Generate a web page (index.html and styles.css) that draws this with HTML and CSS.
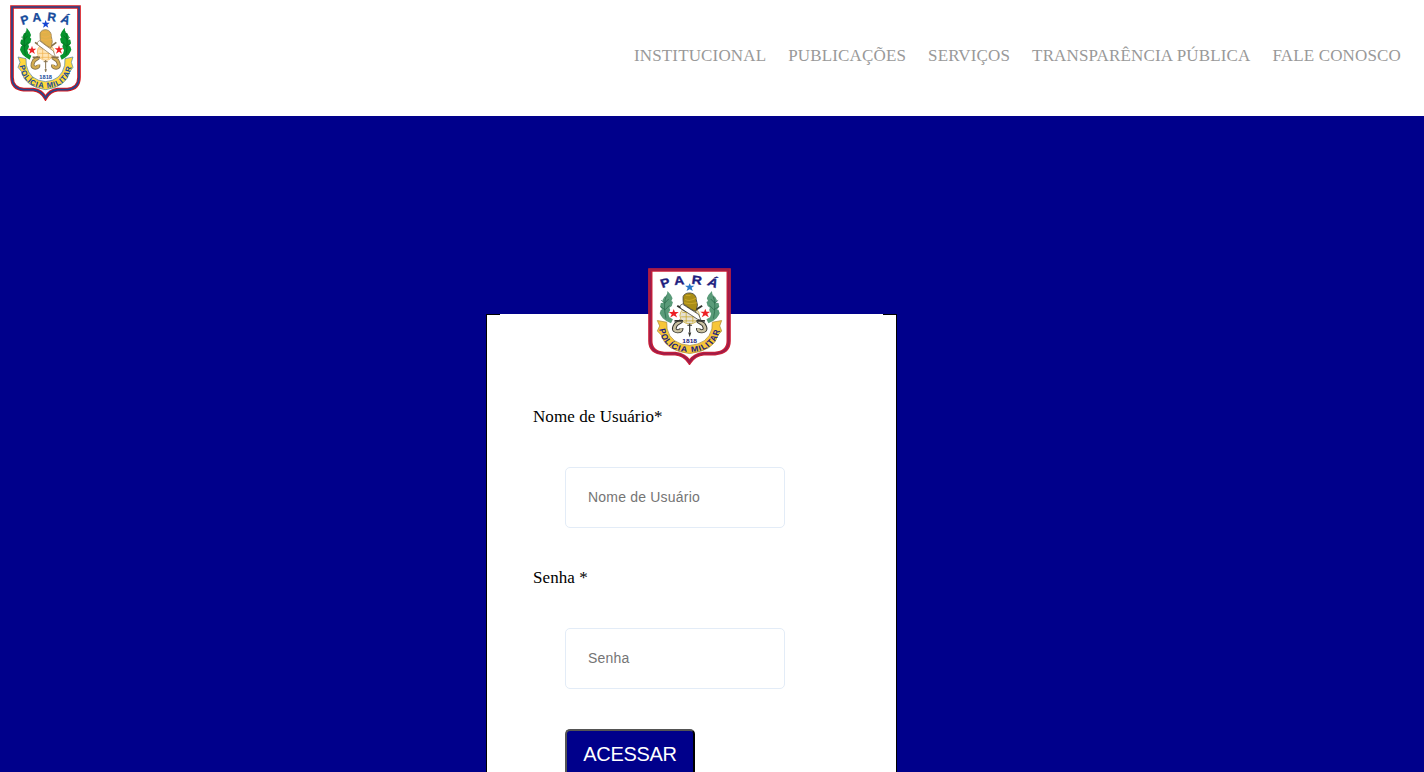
FILE: index.html
```html
<!DOCTYPE html>
<html lang="pt-BR">
<head>
<meta charset="utf-8">
<title>Polícia Militar do Pará</title>
<link rel="stylesheet" href="styles.css">
</head>
<body>
<header class="topbar">
  <svg class="crest crest-small" viewBox="30 15 213 288" preserveAspectRatio="none" role="img" aria-label="Pará Polícia Militar">
    <defs>
      <symbol id="crest" viewBox="30 15 213 288" preserveAspectRatio="none">
        <path d="M36 21H237V232Q237 266 202 269H173Q149 272 136.500 294Q124 272 100 269H71Q36 266 36 232Z" fill="#fff" stroke="var(--edge)" stroke-width="11"/>
        <path d="M36 21H237V232Q237 266 202 269H173Q149 272 136.500 294Q124 272 100 269H71Q36 266 36 232Z" fill="none" stroke="var(--rim)" stroke-width="5"/>
        <g class="crest-name">
          <text transform="translate(78 71) rotate(-18)">P</text>
          <text transform="translate(111 64) rotate(-5)">A</text>
          <text transform="translate(154 63) rotate(7)">R</text>
          <text transform="translate(192 70) rotate(23)">Á</text>
        </g>
        <path d="M137 60l3 8h9l-7 6 3 9-8-5-8 5 3-9-7-6h9z" fill="var(--star)"/>
        <path d="M96 137l3 9h10l-8 6 4 10-9-6-9 6 4-10-8-6h10zM177 136l3 9h10l-8 6 4 10-9-6-9 6 4-10-8-6h10z" fill="#ed2024"/>
        <path d="M80 83l9 12 4 10-3 8 4 3-3 12-6 5 2 7-5 11 3 10 9 6-5 12-12-7-9-8-5-8-3-7 3-10 4-1-6-8 2-11 7-1-3-7 5-11 6-2 1-7z" fill="var(--leaf)"/>
        <path d="M194 83l-9 12-4 10 3 8-4 3 3 12 6 5-2 7 5 11-3 10-9 6 5 12 12-7 9-8 5-8 3-7-3-10-4-1 6-8-2-11-7-1 3-7-5-11-6-2-1-7z" fill="var(--leaf)"/>
        <path d="M78 94Q68 122 76 165M196 94Q206 122 198 165M64 111l9 8 10-12M62 130l12 9 11-13M210 111l-9 8-10-12M211 130l-12 9-11-13" fill="none" stroke="var(--vein)" stroke-width="2"/>
        <circle cx="137" cy="156" r="25" fill="var(--shieldfill)" stroke="var(--gold)" stroke-width="2"/>
        <path d="M118 147h38M115 160h44M121 172h32M128 134v43M145 134v43" stroke="var(--gold)" stroke-width="2"/>
        <path d="M116 172L102 182Q91 201 106 203Q116 203 115 194M158 172L172 182Q183 201 168 203Q158 203 159 194" fill="none" stroke="var(--line)" stroke-width="12"/>
        <path d="M116 172L102 182Q91 201 106 203Q116 203 115 194M158 172L172 182Q183 201 168 203Q158 203 159 194" fill="none" stroke="var(--brass)" stroke-width="7"/>
        <path d="M105 127l24 17M169 127l-16 12M98 172l22 0M176 172l-22 0" stroke="var(--line)" stroke-width="5"/>
        <path d="M112 127l6-5 42 31 6 17-9-3-44-33z" fill="#fff" stroke="var(--line)" stroke-width="2"/>
        <path d="M120 100q4-12 19-11 15 3 15 20l3 16-4 19-13-7-19-15-1-12z" fill="var(--helmet)" stroke="var(--line)" stroke-width="2"/>
        <path d="M125 108q13 9 29-4M127 97h12M123 118l15 3 18-3" fill="none" stroke="var(--gold)" stroke-width="3"/>
        <path d="M137 180v26m-6-21h12m-8 23h4l-2 7z" fill="none" stroke="var(--line)" stroke-width="3"/>
        <text class="crest-year" x="137" y="238">1818</text>
        <path d="M54 171l24 5 1 20q9 45 58 49 47-4 57-49l1-20 24-5-5 16 5 15-9 12q-11 47-73 55-62-8-73-55l-10-12 6-15z" fill="var(--ribbon)" stroke="var(--ribbonline)" stroke-width="2"/>
        <path id="motto" d="M57 185Q64 264 137 264Q211 264 218 178" fill="none"/>
        <text class="crest-motto"><textPath href="#motto" startOffset="12" textLength="224" lengthAdjust="spacing">POLÍCIA MILITAR</textPath></text>
      </symbol>
    </defs>
    <use href="#crest" x="30" y="15" width="213" height="288"/>
  </svg>
  <nav class="menu">
    <a href="#">INSTITUCIONAL</a>
    <a href="#">PUBLICAÇÕES</a>
    <a href="#">SERVIÇOS</a>
    <a href="#">TRANSPARÊNCIA PÚBLICA</a>
    <a href="#">FALE CONOSCO</a>
  </nav>
</header>
<main class="stage">
  <form class="login">
    <div class="notch"></div>
    <svg class="crest crest-large" viewBox="30 15 213 288" preserveAspectRatio="none" role="img" aria-label="Pará Polícia Militar"><use href="#crest" x="30" y="15" width="213" height="288"/></svg>
    <label class="label" for="user">Nome de Usuário*</label>
    <input class="field" id="user" type="text" placeholder="Nome de Usuário">
    <label class="label" for="pass">Senha *</label>
    <input class="field" id="pass" type="password" placeholder="Senha">
    <button class="submit" type="button">ACESSAR</button>
  </form>
</main>
</body>
</html>
```
FILE: styles.css
```css
* { box-sizing: border-box; }
body {
  margin: 0;
  display: flex;
  flex-direction: column;
  height: 772px;
  overflow: hidden;
  background: #00008b;
  font-family: "Liberation Serif", "Times New Roman", serif;
}
.topbar {
  height: 116px;
  flex: none;
  display: flex;
  justify-content: space-between;
  align-items: flex-start;
  padding: 5px 23px 0 10px;
  background: #fff;
}
.crest { display: block; flex: none; }
.crest-small {
  width: 71px;
  height: 96px;
  --edge: #d71920;
  --rim: #27468c;
  --star: #1545d2;
  --leaf: #07942e;
  --vein: #05651e;
  --gold: #efb04a;
  --shieldfill: #ffe5b6;
  --brass: #d4ad50;
  --helmet: #dfb04a;
  --line: #85704a;
  --ribbon: #ffd83e;
  --ribbonline: #4c81a2;
  --name: #164a9b;
}
.crest-large {
  width: 83px;
  height: 97px;
  margin: -47px 0 0 161px;
  --edge: #cc2138;
  --rim: #9c1c4a;
  --star: #2878c8;
  --leaf: #5a9b79;
  --vein: #286849;
  --gold: #c8a526;
  --shieldfill: #e6e1d2;
  --brass: #c9c1a2;
  --helmet: #a98d16;
  --line: #34342f;
  --ribbon: #f7c638;
  --ribbonline: #a98936;
  --name: #20207e;
}
.crest-name {
  font: bold 36px "Liberation Sans", Arial, sans-serif;
  fill: var(--name);
  stroke: var(--name);
  stroke-width: 1px;
  text-anchor: middle;
}
.crest-year {
  font: bold 17px "Liberation Sans", Arial, sans-serif;
  fill: var(--name);
  text-anchor: middle;
}
.crest-motto {
  font: bold 23px "Liberation Sans", Arial, sans-serif;
  fill: var(--name);
}
.menu {
  display: flex;
  gap: 22px;
  padding-top: 41px;
}
.menu a {
  color: #999;
  font-size: 17px;
  letter-spacing: 0.15px;
  line-height: 20px;
  text-decoration: none;
  white-space: nowrap;
}
.stage {
  flex: 1;
  min-height: 0;
  display: flex;
  padding: 198px 0 0 486px;
}
.login {
  display: flex;
  flex-direction: column;
  align-items: flex-start;
  width: 411px;
  border: 1px solid #000;
  border-bottom: 0;
  background: #fff;
}
.notch {
  width: 383px;
  height: 1px;
  margin: -1px 0 0 13px;
  background: #fff;
  flex: none;
}
.label {
  margin: 42px 0 0 46px;
  font-size: 17px;
  letter-spacing: 0.07px;
  line-height: 20px;
  flex: none;
}
.field {
  flex: none;
  width: 220px;
  height: 61px;
  margin: 40px 0 0 78px;
  padding: 0 22px 2px;
  border: 1px solid #e3ecf7;
  border-radius: 5px;
  background: #fff;
  font: 14px "Liberation Sans", Arial, sans-serif;
  letter-spacing: 0.2px;
}
.field + .label { margin-top: 40px; }
.field::placeholder { color: #757575; }
.submit {
  flex: none;
  width: 130px;
  height: 43px;
  margin: 40px 0 0 78px;
  padding: 6px 0 0;
  border: 2px outset #000;
  border-bottom: 0;
  border-radius: 5px 5px 0 0;
  background: #00008b;
  color: #fff;
  font: 20px "Liberation Sans", Arial, sans-serif;
  letter-spacing: -0.3px;
}
```
